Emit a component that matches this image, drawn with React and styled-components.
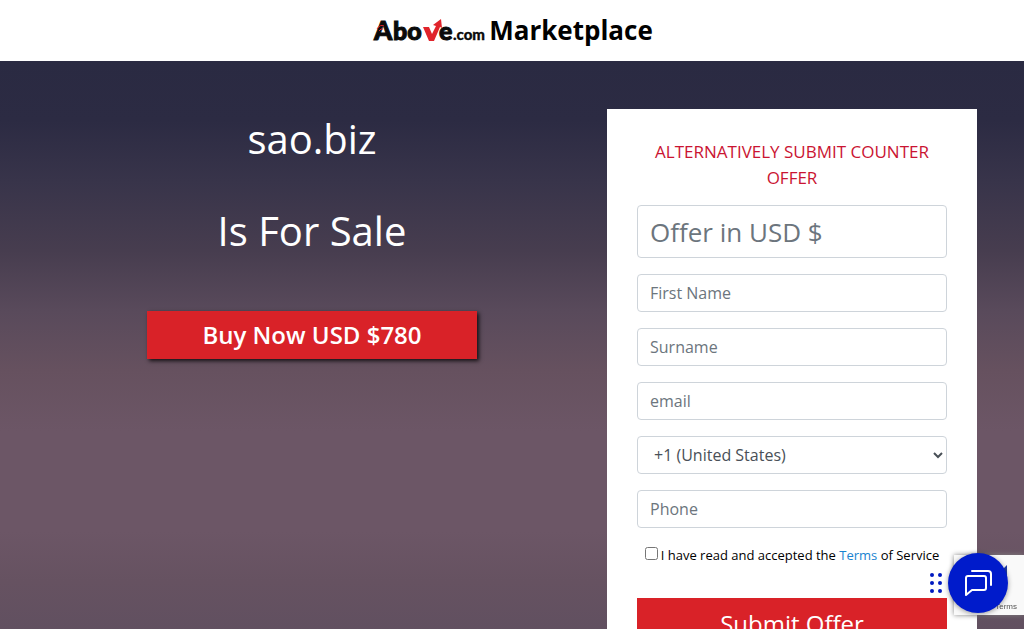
import React from 'react'
import styled, { createGlobalStyle } from 'styled-components'

const GlobalStyle = createGlobalStyle`
  * {
    box-sizing: border-box;
  }
  html {
    scrollbar-width: none;
  }
  body {
    margin: 0;
    background: #fff;
    color: #000;
    font-family: 'Open Sans', sans-serif;
    font-size: 16px;
    line-height: 24px;
  }
`

const Header = styled.header`
  display: flex;
  justify-content: center;
  align-items: center;
  gap: 4px;
  height: 61px;
  padding-bottom: 2px;
`

const Logo = styled.svg`
  width: 114px;
  height: 34px;
`

const HeaderTitle = styled.span`
  font-size: 26px;
  line-height: 36px;
  font-weight: 700;
`

const Hero = styled.main`
  min-height: calc(100vh - 61px);
  padding: 48px 0;
  background: linear-gradient(
    #2a2a42 0px,
    #2c2b43 60px,
    #38344a 120px,
    #473d4f 190px,
    #594a5b 250px,
    #66515f 310px,
    #6c5666 370px,
    #6c5666 470px,
    #665261 520px,
    #615060 568px
  );
`

const Container = styled.div`
  display: grid;
  grid-template-columns: 7fr 5fr;
  align-items: start;
  max-width: 960px;
  margin: 0 auto;
`

const Column = styled.section`
  padding: 0 15px;
`

const Pitch = styled(Column)`
  display: flex;
  flex-direction: column;
  align-items: center;
  color: #fff;
`

const Title = styled.h1`
  margin: 0 0 32px;
  font-size: 40px;
  line-height: 60px;
  font-weight: 400;
`

const Button = styled.button`
  width: 100%;
  height: 48px;
  padding: 0;
  border: 0;
  background: #d92228;
  color: #fff;
  font-family: inherit;
  font-size: 24px;
  line-height: 36px;
  font-weight: 400;
  cursor: pointer;
`

const BuyButton = styled(Button)`
  max-width: 330px;
  margin-top: 18px;
  font-weight: 600;
  box-shadow: 2px 2px 4px 0 rgba(0, 0, 0, 0.8);
`

const SubmitButton = styled(Button)`
  height: 52px;
`

const Card = styled.form`
  display: flex;
  flex-direction: column;
  gap: 16px;
  padding: 30px;
  background: #fff;
`

const CardTitle = styled.h2`
  margin: 0 0 -2px;
  color: #ca1432;
  font-size: 17px;
  line-height: 26px;
  font-weight: 400;
  text-align: center;
  text-transform: uppercase;
`

const Field = styled.input`
  width: 100%;
  height: ${props => props.$large ? '53px' : '38px'};
  padding: 6px 12px;
  border: 1px solid #ced4da;
  border-radius: 4px;
  background: #fff;
  color: #495057;
  font-family: inherit;
  font-size: ${props => props.$large ? '26px' : '16px'};

  &::placeholder {
    color: #6c757d;
    opacity: 1;
  }
`

const Select = styled.select`
  width: 100%;
  height: 38px;
  padding: 6px 0 6px 12px;
  border: 1px solid #ced4da;
  border-radius: 4px;
  background: #fff;
  color: #495057;
  font-family: inherit;
  font-size: 16px;
`

const Agreement = styled.div`
  display: flex;
  justify-content: center;
  gap: 3px;
  margin-bottom: 16px;
  font-size: 13px;
  line-height: 22px;

  input {
    width: 13px;
    height: 13px;
    margin: 3px 0 0;
  }

  a {
    color: #1883d0;
    text-decoration: none;
  }
`

const Recaptcha = styled.aside`
  position: fixed;
  right: 0;
  bottom: 14px;
  display: flex;
  flex-direction: column;
  align-items: flex-end;
  justify-content: space-between;
  width: 70px;
  height: 60px;
  padding: 8px 7px 2px 0;
  background: #f9f9f9;
  box-shadow: 0 0 5px gray;
  color: #555;
  font-family: 'Liberation Sans', sans-serif;
  font-size: 8px;
  line-height: 12px;

  svg {
    margin-right: 10px;
  }
`

const Chat = styled.div`
  position: fixed;
  right: 16px;
  bottom: 16px;
  display: flex;
  align-items: center;
  gap: 6px;
`

const Grip = styled.svg`
  width: 12px;
  height: 20px;
  fill: #0019c0;
`

const ChatButton = styled.button`
  display: flex;
  justify-content: center;
  align-items: center;
  width: 60px;
  height: 60px;
  padding: 0;
  border: 0;
  border-radius: 50%;
  background: #001bcb;
  box-shadow: 0 1px 5px rgba(0, 0, 0, 0.4);
  cursor: pointer;
`

const AboveLogo = () => (
  <Logo viewBox='0 0 114 34' role='img' aria-label='Above.com'>
    <g fontFamily='Lato, sans-serif' fontWeight='900' fill='#0b0b0b' stroke='#0b0b0b' strokeWidth='1'>
      <text x='3' y='27' fontSize='26'>A</text>
      <text x='22' y='27' fontSize='25'>bo</text>
      <text x='68' y='27' fontSize='25'>e</text>
      <text x='82' y='27' fontSize='15' strokeWidth='0.3'>.com</text>
    </g>
    <path d='M6 16q3-5 7-3M8 18q2-3 4-2' fill='none' stroke='#e0242b' strokeWidth='1' />
    <path d='M52 14h6l3 7 4-8-3-1 8-6 1 9-2-1-6 14h-5z' fill='#e0242b' />
  </Logo>
)

const fields = [
  { name: 'first', label: 'First Name' },
  { name: 'surname', label: 'Surname' },
  { name: 'email', label: 'email', type: 'email' }
]

const App = () => (
  <>
    <GlobalStyle />
    <Header>
      <AboveLogo />
      <HeaderTitle>Marketplace</HeaderTitle>
    </Header>
    <Hero>
      <Container>
        <Pitch>
          <Title>sao.biz</Title>
          <Title>Is For Sale</Title>
          <BuyButton type='button'>Buy Now USD $780</BuyButton>
        </Pitch>
        <Column>
          <Card>
            <CardTitle>Alternatively submit counter offer</CardTitle>
            <Field $large name='offer' placeholder='Offer in USD $' aria-label='Offer in USD $' />
            {fields.map(({ name, label, type = 'text' }) => (
              <Field key={name} name={name} type={type} placeholder={label} aria-label={label} />
            ))}
            <Select name='country' aria-label='Country code'>
              <option>+1 (United States)</option>
            </Select>
            <Field name='phone' type='tel' placeholder='Phone' aria-label='Phone' />
            <Agreement>
              <input id='terms' type='checkbox' />
              <label htmlFor='terms'>I have read and accepted the <a href='#terms'>Terms</a> of Service</label>
            </Agreement>
            <SubmitButton type='submit'>Submit Offer</SubmitButton>
          </Card>
        </Column>
      </Container>
    </Hero>
    <Recaptcha>
      <svg width='32' height='32' viewBox='0 0 32 32'>
        <path d='M32 2v14H18l4-4a9 9 0 0 0-16 2L1 10A16 16 0 0 1 27 7z' fill='#1c3aa9' />
      </svg>
      Terms
    </Recaptcha>
    <Chat>
      <Grip viewBox='0 0 12 20'>
        {[2, 10, 18].map(y => (
          <React.Fragment key={y}>
            <circle cx='2' cy={y} r='2' />
            <circle cx='10' cy={y} r='2' />
          </React.Fragment>
        ))}
      </Grip>
      <ChatButton type='button' aria-label='Open chat'>
        <svg width='28' height='28' viewBox='0 0 28 28' fill='none' stroke='#fff' strokeWidth='2' strokeLinejoin='round' strokeLinecap='round'>
          <path d='M4 7h16a2 2 0 0 1 2 2v10a2 2 0 0 1-2 2H8l-6 5V9a2 2 0 0 1 2-2z' />
          <path d='M8 2h16a3 3 0 0 1 3 3v11' />
        </svg>
      </ChatButton>
    </Chat>
  </>
)

export default App
